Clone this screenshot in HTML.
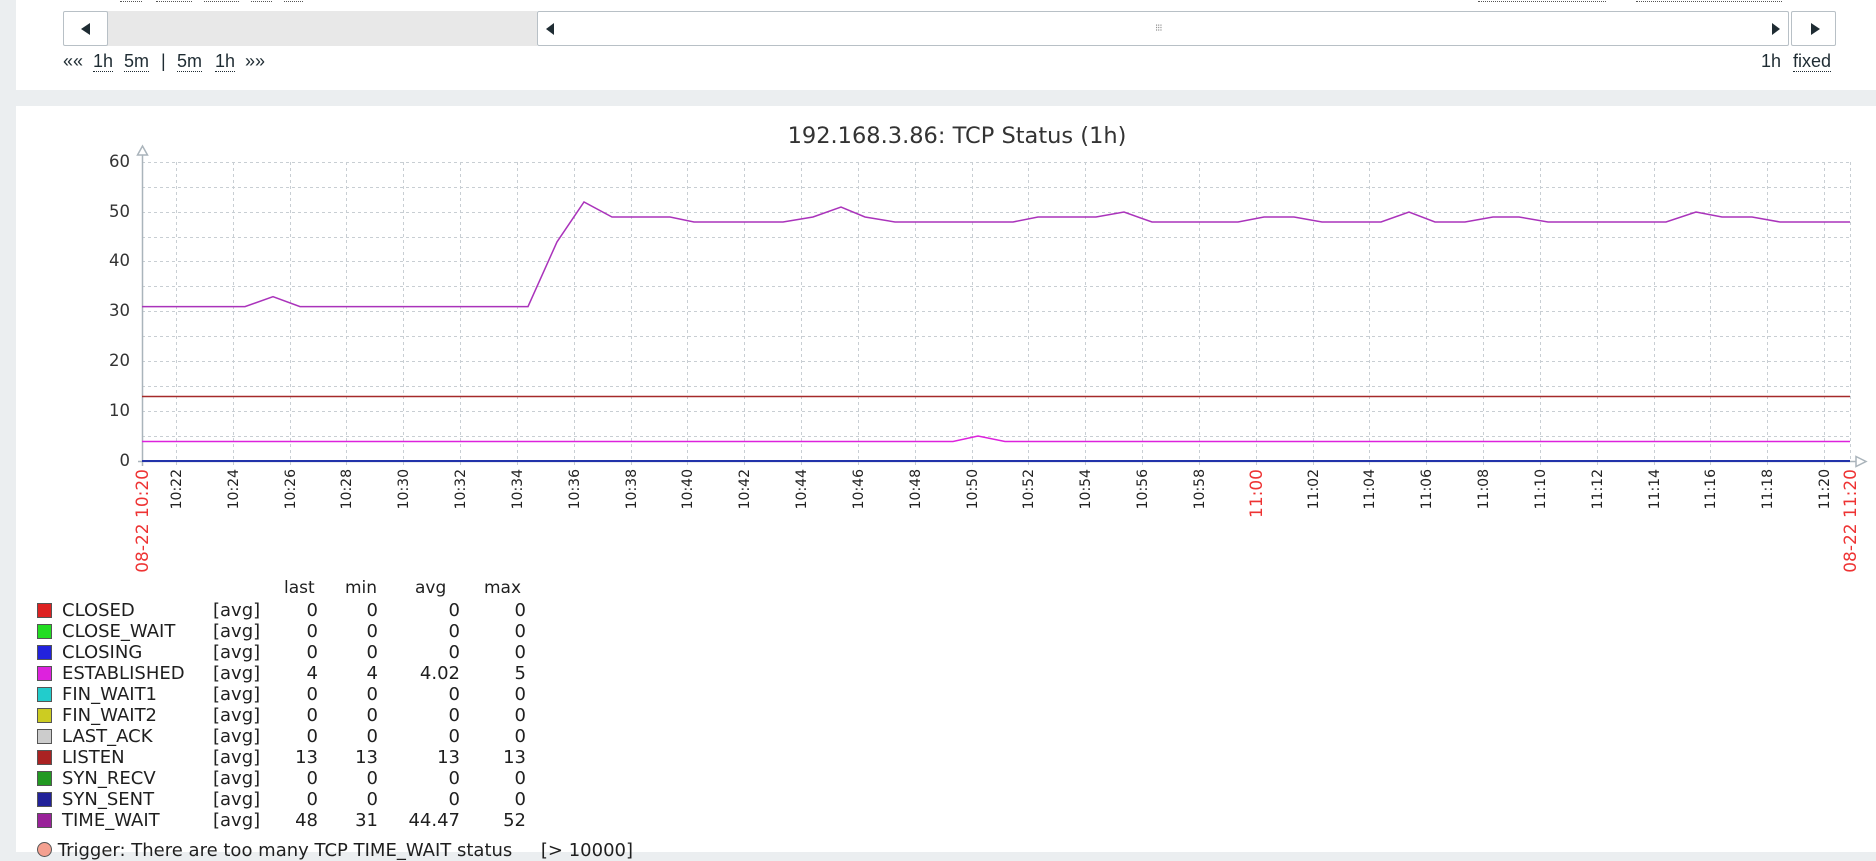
<!DOCTYPE html>
<html><head><meta charset="utf-8"><style>
html,body{margin:0;padding:0;width:1876px;height:852px;overflow:hidden;background:#ebeef0;font-family:"Liberation Sans",Arial,sans-serif;}
.card{position:absolute;background:#fff;}
.btn{position:absolute;background:#fff;border:1px solid #b8c0c6;border-radius:2px;box-sizing:border-box;}
.tri{position:absolute;width:0;height:0;border-top:6px solid transparent;border-bottom:6px solid transparent;}
.nav{position:absolute;top:51px;font-size:18px;color:#1f2c33;}
.u{border-bottom:1px dotted #1f2c33;}
table.lg td{padding:0;height:21px;line-height:21px;}
</style></head><body>
<div class="card" style="left:16px;top:0;width:1860px;height:90px;"></div>
<div class="card" style="left:16px;top:106px;width:1860px;height:746px;"></div>
<div style="position:absolute;top:1px;left:120px;width:22px;border-top:1px dotted #555"></div>
<div style="position:absolute;top:1px;left:156px;width:36px;border-top:1px dotted #555"></div>
<div style="position:absolute;top:1px;left:204px;width:35px;border-top:1px dotted #555"></div>
<div style="position:absolute;top:1px;left:251px;width:21px;border-top:1px dotted #555"></div>
<div style="position:absolute;top:1px;left:284px;width:19px;border-top:1px dotted #555"></div>
<div style="position:absolute;top:1px;left:1478px;width:128px;border-top:1px dotted #555"></div>
<div style="position:absolute;top:1px;left:1636px;width:146px;border-top:1px dotted #555"></div>
<div style="position:absolute;left:107px;top:11px;width:430px;height:35px;background:#e8e8e8"></div>
<div class="btn" style="left:63px;top:11px;width:45px;height:35px;"><div class="tri" style="left:17px;top:11px;border-right:9px solid #1f2c33"></div></div>
<div class="btn" style="left:537px;top:11px;width:1252px;height:35px;"><div class="tri" style="left:8px;top:11px;border-right:8px solid #1f2c33"></div><div class="tri" style="right:8px;top:11px;border-left:8px solid #1f2c33"></div><div style="position:absolute;left:617px;top:11px;font-size:10px;color:#888;letter-spacing:-1px">⁝⁝⁝</div></div>
<div class="btn" style="left:1791px;top:11px;width:45px;height:35px;"><div class="tri" style="left:19px;top:11px;border-left:9px solid #1f2c33"></div></div>
<div class="nav" style="left:63px">««</div>
<div class="nav" style="left:93px"><span class="u">1h</span></div>
<div class="nav" style="left:124px"><span class="u">5m</span></div>
<div class="nav" style="left:161px">|</div>
<div class="nav" style="left:177px"><span class="u">5m</span></div>
<div class="nav" style="left:215px"><span class="u">1h</span></div>
<div class="nav" style="left:245px">»»</div>
<div class="nav" style="left:1761px">1h</div>
<div class="nav" style="left:1793px"><span class="u">fixed</span></div>

<svg style="position:absolute;left:0;top:0" width="1876" height="852" font-family="DejaVu Sans, sans-serif">
<text x="957" y="143" text-anchor="middle" font-size="22.5" fill="#333">192.168.3.86: TCP Status (1h)</text>
<g stroke="#c8ced3" stroke-dasharray="3,3" stroke-width="1">
<line x1="142" y1="162.5" x2="1850" y2="162.5"/><line x1="142" y1="187.5" x2="1850" y2="187.5"/><line x1="142" y1="212.5" x2="1850" y2="212.5"/><line x1="142" y1="237.5" x2="1850" y2="237.5"/><line x1="142" y1="261.5" x2="1850" y2="261.5"/><line x1="142" y1="286.5" x2="1850" y2="286.5"/><line x1="142" y1="311.5" x2="1850" y2="311.5"/><line x1="142" y1="336.5" x2="1850" y2="336.5"/><line x1="142" y1="361.5" x2="1850" y2="361.5"/><line x1="142" y1="386.5" x2="1850" y2="386.5"/><line x1="142" y1="411.5" x2="1850" y2="411.5"/><line x1="142" y1="436.5" x2="1850" y2="436.5"/>
<line x1="176.5" y1="162" x2="176.5" y2="465"/><line x1="233.5" y1="162" x2="233.5" y2="465"/><line x1="290.5" y1="162" x2="290.5" y2="465"/><line x1="346.5" y1="162" x2="346.5" y2="465"/><line x1="403.5" y1="162" x2="403.5" y2="465"/><line x1="460.5" y1="162" x2="460.5" y2="465"/><line x1="517.5" y1="162" x2="517.5" y2="465"/><line x1="574.5" y1="162" x2="574.5" y2="465"/><line x1="631.5" y1="162" x2="631.5" y2="465"/><line x1="687.5" y1="162" x2="687.5" y2="465"/><line x1="744.5" y1="162" x2="744.5" y2="465"/><line x1="801.5" y1="162" x2="801.5" y2="465"/><line x1="858.5" y1="162" x2="858.5" y2="465"/><line x1="915.5" y1="162" x2="915.5" y2="465"/><line x1="972.5" y1="162" x2="972.5" y2="465"/><line x1="1028.5" y1="162" x2="1028.5" y2="465"/><line x1="1085.5" y1="162" x2="1085.5" y2="465"/><line x1="1142.5" y1="162" x2="1142.5" y2="465"/><line x1="1199.5" y1="162" x2="1199.5" y2="465"/><line x1="1256.5" y1="162" x2="1256.5" y2="465"/><line x1="1313.5" y1="162" x2="1313.5" y2="465"/><line x1="1369.5" y1="162" x2="1369.5" y2="465"/><line x1="1426.5" y1="162" x2="1426.5" y2="465"/><line x1="1483.5" y1="162" x2="1483.5" y2="465"/><line x1="1540.5" y1="162" x2="1540.5" y2="465"/><line x1="1597.5" y1="162" x2="1597.5" y2="465"/><line x1="1654.5" y1="162" x2="1654.5" y2="465"/><line x1="1710.5" y1="162" x2="1710.5" y2="465"/><line x1="1767.5" y1="162" x2="1767.5" y2="465"/><line x1="1824.5" y1="162" x2="1824.5" y2="465"/><line x1="1850.5" y1="162" x2="1850.5" y2="461"/>
</g>
<g stroke="#aab4bb" stroke-width="1.5" fill="#fff">
<line x1="142.5" y1="150" x2="142.5" y2="466"/>
<line x1="138" y1="461.5" x2="1860" y2="461.5"/>
<path d="M137.5 155 L142.5 146 L147.5 155 Z"/>
<path d="M1856 456.5 L1866 461.5 L1856 466.5 Z"/>
</g>
<g font-size="16.5" fill="#333" text-anchor="end">
<text x="130" y="167">60</text><text x="130" y="217">50</text><text x="130" y="266">40</text><text x="130" y="316">30</text><text x="130" y="366">20</text><text x="130" y="416">10</text><text x="130" y="466">0</text>
</g>
<line x1="142" y1="396.5" x2="1850" y2="396.5" stroke="#a52a2a" stroke-width="1.5"/>
<polyline fill="none" stroke="#dd22dd" stroke-width="1.5" points="142,441.5 953,441.5 978,436 1005,441.5 1850,441.5"/>
<polyline fill="none" stroke="#aa33bb" stroke-width="1.5" points="142,306.6 245,306.6 273,296.7 300,306.6 528,306.6 557,241.9 584,202 612,217 670,217 694,222 783,222 813,217 841,207 865,217 895,222 1013,222 1038,217 1096,217 1124,212 1152,222 1238,222 1264,217 1294,217 1322,222 1381,222 1409,212 1435,222 1465,222 1493,217 1519,217 1548,222 1666,222 1696,212 1722,217 1752,217 1780,222 1850,222"/>
<line x1="142" y1="461" x2="1850" y2="461" stroke="#2233aa" stroke-width="2"/>
<g font-size="14" fill="#222" text-anchor="end">
<text transform="translate(181,469) rotate(-90)">10:22</text><text transform="translate(238,469) rotate(-90)">10:24</text><text transform="translate(295,469) rotate(-90)">10:26</text><text transform="translate(351,469) rotate(-90)">10:28</text><text transform="translate(408,469) rotate(-90)">10:30</text><text transform="translate(465,469) rotate(-90)">10:32</text><text transform="translate(522,469) rotate(-90)">10:34</text><text transform="translate(579,469) rotate(-90)">10:36</text><text transform="translate(636,469) rotate(-90)">10:38</text><text transform="translate(692,469) rotate(-90)">10:40</text><text transform="translate(749,469) rotate(-90)">10:42</text><text transform="translate(806,469) rotate(-90)">10:44</text><text transform="translate(863,469) rotate(-90)">10:46</text><text transform="translate(920,469) rotate(-90)">10:48</text><text transform="translate(977,469) rotate(-90)">10:50</text><text transform="translate(1033,469) rotate(-90)">10:52</text><text transform="translate(1090,469) rotate(-90)">10:54</text><text transform="translate(1147,469) rotate(-90)">10:56</text><text transform="translate(1204,469) rotate(-90)">10:58</text><text transform="translate(1262,469) rotate(-90)" fill="#ee3333" font-size="17">11:00</text><text transform="translate(1318,469) rotate(-90)">11:02</text><text transform="translate(1374,469) rotate(-90)">11:04</text><text transform="translate(1431,469) rotate(-90)">11:06</text><text transform="translate(1488,469) rotate(-90)">11:08</text><text transform="translate(1545,469) rotate(-90)">11:10</text><text transform="translate(1602,469) rotate(-90)">11:12</text><text transform="translate(1659,469) rotate(-90)">11:14</text><text transform="translate(1715,469) rotate(-90)">11:16</text><text transform="translate(1772,469) rotate(-90)">11:18</text><text transform="translate(1829,469) rotate(-90)">11:20</text>
<text transform="translate(148,469) rotate(-90)" fill="#ee3333" font-size="17">08-22 10:20</text>
<text transform="translate(1856,469) rotate(-90)" fill="#ee3333" font-size="17">08-22 11:20</text>
</g>
</svg>

<div style="position:absolute;top:578px;left:0;font-family:'DejaVu Sans',sans-serif;font-size:17px;color:#1f1f1f">
<span style="position:absolute;left:284px;">last</span><span style="position:absolute;left:345px;">min</span><span style="position:absolute;left:415px;">avg</span><span style="position:absolute;left:484px;">max</span>
</div>
<table class="lg" style="position:absolute;left:37px;top:600px;border-collapse:collapse;font-family:'DejaVu Sans',sans-serif;font-size:18px;color:#1f1f1f">
<colgroup><col style="width:25px"><col style="width:151px"><col style="width:50px"><col style="width:55px"><col style="width:60px"><col style="width:82px"><col style="width:66px"></colgroup>
<tr><td><i style="display:block;width:13px;height:13px;border:1px solid #555;background:#dd2222"></i></td><td>CLOSED</td><td>[avg]</td><td align="right">0</td><td align="right">0</td><td align="right">0</td><td align="right">0</td></tr>
<tr><td><i style="display:block;width:13px;height:13px;border:1px solid #555;background:#22dd22"></i></td><td>CLOSE_WAIT</td><td>[avg]</td><td align="right">0</td><td align="right">0</td><td align="right">0</td><td align="right">0</td></tr>
<tr><td><i style="display:block;width:13px;height:13px;border:1px solid #555;background:#2222dd"></i></td><td>CLOSING</td><td>[avg]</td><td align="right">0</td><td align="right">0</td><td align="right">0</td><td align="right">0</td></tr>
<tr><td><i style="display:block;width:13px;height:13px;border:1px solid #555;background:#dd22dd"></i></td><td>ESTABLISHED</td><td>[avg]</td><td align="right">4</td><td align="right">4</td><td align="right">4.02</td><td align="right">5</td></tr>
<tr><td><i style="display:block;width:13px;height:13px;border:1px solid #555;background:#22cccc"></i></td><td>FIN_WAIT1</td><td>[avg]</td><td align="right">0</td><td align="right">0</td><td align="right">0</td><td align="right">0</td></tr>
<tr><td><i style="display:block;width:13px;height:13px;border:1px solid #555;background:#cccc22"></i></td><td>FIN_WAIT2</td><td>[avg]</td><td align="right">0</td><td align="right">0</td><td align="right">0</td><td align="right">0</td></tr>
<tr><td><i style="display:block;width:13px;height:13px;border:1px solid #555;background:#cccccc"></i></td><td>LAST_ACK</td><td>[avg]</td><td align="right">0</td><td align="right">0</td><td align="right">0</td><td align="right">0</td></tr>
<tr><td><i style="display:block;width:13px;height:13px;border:1px solid #555;background:#aa2222"></i></td><td>LISTEN</td><td>[avg]</td><td align="right">13</td><td align="right">13</td><td align="right">13</td><td align="right">13</td></tr>
<tr><td><i style="display:block;width:13px;height:13px;border:1px solid #555;background:#229922"></i></td><td>SYN_RECV</td><td>[avg]</td><td align="right">0</td><td align="right">0</td><td align="right">0</td><td align="right">0</td></tr>
<tr><td><i style="display:block;width:13px;height:13px;border:1px solid #555;background:#222299"></i></td><td>SYN_SENT</td><td>[avg]</td><td align="right">0</td><td align="right">0</td><td align="right">0</td><td align="right">0</td></tr>
<tr><td><i style="display:block;width:13px;height:13px;border:1px solid #555;background:#992299"></i></td><td>TIME_WAIT</td><td>[avg]</td><td align="right">48</td><td align="right">31</td><td align="right">44.47</td><td align="right">52</td></tr>
</table>
<div style="position:absolute;left:37px;top:840px;font-family:'DejaVu Sans',sans-serif;font-size:18px;color:#1f1f1f;white-space:nowrap"><i style="display:inline-block;width:13px;height:13px;border:1px solid #555;border-radius:50%;background:#f4a090;vertical-align:-1px"></i> Trigger: There are too many TCP TIME_WAIT status&nbsp;&nbsp;&nbsp;&nbsp; [&gt; 10000]</div>
</body></html>
